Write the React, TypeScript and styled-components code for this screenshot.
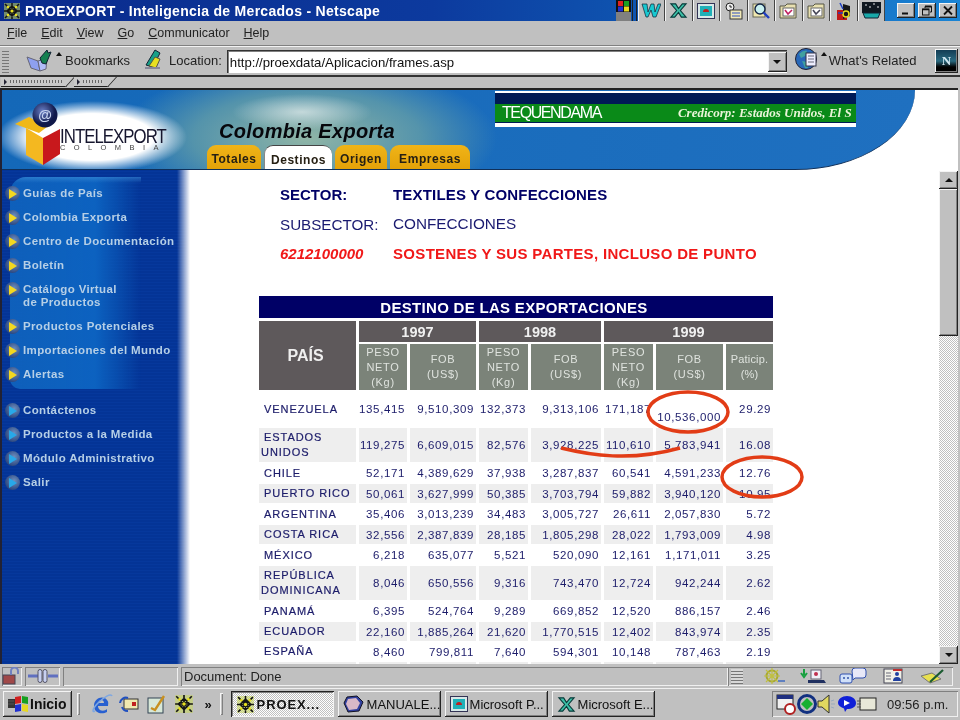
import React from 'react';
import styled, { createGlobalStyle, css } from 'styled-components';

const Global = createGlobalStyle`
  html, body { margin: 0; padding: 0; background: #c0c0c0; }
  body { font-family: "Liberation Sans", Arial, sans-serif; }
`;

const raised = css`
  background: #c0c0c0;
  box-shadow: inset -1px -1px 0 #222, inset 1px 1px 0 #f4f4f4, inset -2px -2px 0 #808080;
`;
const sunken = css`
  box-shadow: inset 1px 1px 0 #808080, inset -1px -1px 0 #f0f0f0;
`;

const Frame = styled.div`
  position: relative;
  width: 960px;
  height: 720px;
  overflow: hidden;
  background: #c0c0c0;
  display: flex;
  flex-direction: column;
  filter: blur(0.45px);
`;

/* Title bar */
const TitleBar = styled.div`
  height: 21px;
  flex: none;
  display: flex;
  align-items: center;
  background: linear-gradient(90deg, #0a2a8c 0%, #0c3a9e 45%, #1060b8 75%, #1a84d4 100%);
  color: #fff;
  padding-left: 3px;
`;
const TitleText = styled.div`
  font-weight: 700;
  font-size: 14px;
  letter-spacing: 0.29px;
  margin-left: 4px;
  white-space: nowrap;
`;
const QuickTray = styled.div`
  margin-left: auto;
  display: flex;
  align-items: center;
  height: 21px;
`;
const ColorBox = styled.div`
  width: 15px;
  height: 21px;
  background: #808080;
  margin-right: 1px;
  svg { display: block; }
`;
const Grip = styled.div`
  width: 3px;
  height: 21px;
  border-left: 1px solid #222;
  border-right: 1px solid #222;
  margin-right: 1px;
`;
const QuickBtn = styled.div`
  width: 27.5px;
  height: 21px;
  background: #c0c0c0;
  box-shadow: inset 1px 0 0 #f4f4f4, inset -1px 0 0 #444;
  display: flex;
  align-items: center;
  justify-content: center;
`;
const WinBtns = styled.div`
  display: flex;
  gap: 3px;
  margin-left: 12px;
  margin-right: 3px;
`;
const WinBtn = styled.div`
  ${raised}
  width: 18px;
  height: 15px;
  display: flex;
  align-items: center;
  justify-content: center;
`;

/* Menu */
const MenuBar = styled.div`
  height: 25px;
  flex: none;
  display: flex;
  align-items: center;
  gap: 14px;
  padding-left: 7px;
  font-size: 12.5px;
  color: #222;
  border-bottom: 1px solid #808080;
  box-sizing: border-box;
`;
const MenuItem = styled.span`
  &::first-letter { text-decoration: underline; }
  display: inline-block;
`;

/* Location toolbar */
const Toolbar = styled.div`
  height: 31px;
  flex: none;
  box-sizing: border-box;
  border-top: 1px solid #f2f2f2;
  border-bottom: 2px solid #333;
  display: flex;
  align-items: center;
  font-size: 13px;
  color: #222;
`;
const ToolGrip = styled.div`
  width: 7px;
  height: 24px;
  margin-left: 2px;
  background: repeating-linear-gradient(0deg, #777 0 1px, #c0c0c0 1px 3px);
`;
const BookIcon = styled.div`
  margin-left: 17px;
  width: 30px;
  height: 24px;
`;
const TinyArrow = styled.div`
  width: 0;
  height: 0;
  border-left: 3px solid transparent;
  border-right: 3px solid transparent;
  border-bottom: 4px solid #111;
  align-self: flex-start;
  margin: 5px 0 0 0;
`;
const ToolLabel = styled.span<{ $left: number }>`
  margin-left: ${p => p.$left}px;
  margin-bottom: 1px;
  white-space: nowrap;
`;
const UrlBox = styled.div`
  margin-left: 5px;
  width: 560px;
  height: 23px;
  box-sizing: border-box;
  background: #fff;
  box-shadow: inset 1px 1px 0 #333, inset 2px 2px 0 #808080;
  display: flex;
  align-items: center;
  justify-content: space-between;
  padding: 2px 0 0 3px;
  font-size: 13.2px;
  color: #111;
`;
const DropBtn = styled.div`
  ${raised}
  width: 19px;
  height: 20px;
  display: flex;
  align-items: center;
  justify-content: center;
  &::after {
    content: "";
    border-left: 4px solid transparent;
    border-right: 4px solid transparent;
    border-top: 4px solid #111;
  }
`;
const NBtn = styled.div`
  ${raised}
  margin-left: auto;
  margin-right: 2px;
  width: 23px;
  height: 24px;
  display: flex;
  align-items: center;
  justify-content: center;
  font: 700 13px "Liberation Serif", serif;
  color: #cfe6f0;
  background: linear-gradient(180deg, #103850 0%, #2a6a80 50%, #000 75%);
`;

/* Personal bar tabs */
const ThinBar = styled.div`
  height: 11px;
  flex: none;
  display: flex;
  padding-left: 1px;
  filter: drop-shadow(1px 0 0 #222);
`;
const ThinTab = styled.div<{ $w: number }>`
  width: ${p => p.$w}px;
  height: 10px;
  box-sizing: border-box;
  background: #c8c8c8;
  border-bottom: 1px solid #222;
  clip-path: polygon(0 0, 100% 0, calc(100% - 9px) 100%, 0 100%);
  display: flex;
  align-items: center;
  padding-left: 3px;
  &::before {
    content: "";
    border-top: 3px solid transparent;
    border-bottom: 3px solid transparent;
    border-left: 3px solid #223;
  }
  &::after {
    content: "";
    margin-left: 3px;
    height: 3px;
    flex: 1;
    margin-right: 12px;
    background: repeating-linear-gradient(90deg, #666 0 1px, #ccc 1px 3px);
  }
`;

/* Viewport */
const Viewport = styled.div`
  height: 576px;
  flex: none;
  box-sizing: border-box;
  border-top: 2px solid #222;
  border-left: 2px solid #223;
  margin-right: 2px;
  background: #fff;
  display: flex;
  flex-direction: column;
  overflow: hidden;
`;
const Banner = styled.div`
  height: 80px;
  width: 913px;
  flex: none;
  box-sizing: border-box;
  display: flex;
  border-bottom: 1px solid #10305a;
  border-bottom-right-radius: 120px 80px;
  overflow: hidden;
  background:
    radial-gradient(ellipse 70px 18px at 300px 22px, rgba(225,235,235,.75), rgba(225,235,235,0) 100%),
    radial-gradient(ellipse 190px 75px at 305px 48px, rgba(150,185,165,.95), rgba(110,165,165,.7) 60%, rgba(30,110,190,0) 100%),
    linear-gradient(90deg, #1468b8 0%, #1f70c0 100%);
`;
const LogoBlock = styled.div`
  width: 205px;
  flex: none;
  display: flex;
  align-items: flex-end;
  padding: 0 0 4px 13px;
  box-sizing: border-box;
  background: radial-gradient(ellipse 95px 36px at 90px 47px, #fff 0%, #fff 65%, rgba(255,255,255,0) 100%);
`;
const LogoWords = styled.div`
  margin-left: -5px;
  padding-bottom: 13px;
  display: flex;
  flex-direction: column;
`;
const LogoName = styled.div`
  font-size: 21px;
  line-height: 17px;
  letter-spacing: -1.2px;
  color: #16162e;
  transform: scaleX(.8);
  transform-origin: left;
  white-space: nowrap;
`;
const LogoSub = styled.div`
  font-size: 7.5px;
  line-height: 8px;
  letter-spacing: 8.4px;
  color: #444;
  white-space: nowrap;
`;
const TitleCol = styled.div`
  width: 288px;
  flex: none;
  display: flex;
  flex-direction: column;
  justify-content: flex-end;
`;
const BrandTitle = styled.div`
  margin: 0 0 2px 12px;
  font: italic 700 20px "Liberation Sans", sans-serif;
  letter-spacing: .3px;
  color: #07070c;
  white-space: nowrap;
`;
const Tabs = styled.div`
  display: flex;
  height: 24px;
  gap: 3px;
`;
const Tab = styled.div<{ $active?: boolean; $w: number }>`
  width: ${p => p.$w}px;
  height: ${p => (p.$active ? 25 : 24)}px;
  box-sizing: border-box;
  border-radius: 9px 9px 0 0;
  background: ${p => (p.$active ? '#fff' : 'linear-gradient(180deg,#f0b418,#e4a208)')};
  ${p => p.$active && 'border-top: 1px solid #444; border-left: 1px solid #888;'}
  font-weight: 700;
  font-size: 12px;
  letter-spacing: .55px;
  color: #262014;
  display: flex;
  align-items: center;
  justify-content: center;
  padding-top: 4px;
`;
const Ad = styled.div`
  margin-top: 1px;
  width: 361px;
  height: 36px;
  flex: none;
  box-sizing: border-box;
  background: #001a55;
  border-top: 2px solid #fff;
  border-bottom: 4px solid #fff;
  display: flex;
  flex-direction: column;
  justify-content: flex-end;
  overflow: hidden;
`;
const AdStripe = styled.div`
  height: 18px;
  margin-bottom: 1px;
  background: #0a8a18;
  color: #fff;
  display: flex;
  align-items: center;
  white-space: nowrap;
  overflow: hidden;
`;
const AdBrand = styled.span`
  margin-left: 7px;
  font-size: 16px;
  letter-spacing: -1.4px;
`;
const AdText = styled.span`
  margin-left: 77px;
  font: italic 700 13px "Liberation Serif", serif;
  letter-spacing: 0;
  color: #eaf5d8;
`;

const Body = styled.div`
  flex: 1;
  display: flex;
  min-height: 0;
`;

/* Sidebar */
const Sidebar = styled.nav`
  width: 188px;
  flex: none;
  box-sizing: border-box;
  padding-top: 7px;
  background:
    linear-gradient(90deg, rgba(255,255,255,0) 175px, #fff 188px),
    repeating-linear-gradient(0deg, #06389c 0 1px, #043496 1px 3px);
`;
const NavPanel = styled.div`
  width: 131px;
  margin-left: 8px;
  box-sizing: border-box;
  padding: 4px 0 3px;
  border-radius: 16px 0 0 10px;
  background:
    linear-gradient(180deg, rgba(70,150,220,.5) 0, rgba(70,150,220,0) 6px),
    linear-gradient(90deg, rgba(16,100,190,.9), #0c62c0 65%, rgba(8,80,180,0) 100%);
`;
const NavGroup = styled.div`
  margin: 9px 0 0 8px;
`;
const NavItem = styled.div<{ $tall?: boolean }>`
  height: ${p => (p.$tall ? 37 : 24)}px;
  display: flex;
  align-items: flex-start;
  margin-left: -5px;
  white-space: nowrap;
  font-weight: 700;
  font-size: 11.5px;
  letter-spacing: .36px;
  line-height: 13px;
  color: #b6cfe6;
`;
const NavLabel = styled.span`
  margin: 6px 0 0 3px;
`;
const Bullet = styled.span<{ $color: string }>`
  width: 15px;
  height: 15px;
  margin-top: 5px;
  flex: none;
  border-radius: 50%;
  background: radial-gradient(circle at 60% 40%, #6e90c0, #122a66);
  display: flex;
  align-items: center;
  justify-content: center;
  &::after {
    content: "";
    margin-left: 1px;
    border-top: 5px solid transparent;
    border-bottom: 5px solid transparent;
    border-left: 8px solid ${p => p.$color};
  }
`;

/* Main */
const Main = styled.main`
  flex: 1;
  min-width: 0;
  overflow: hidden;
  padding: 10px 0 0 90px;
`;
const InfoRow = styled.div<{ $h: number; $color: string }>`
  display: flex;
  height: ${p => p.$h}px;
  align-items: center;
  color: ${p => p.$color};
  white-space: nowrap;
`;
const InfoKey = styled.div<{ $italic?: boolean; $bold?: boolean }>`
  width: 113px;
  flex: none;
  font-size: ${p => (p.$bold ? 15 : 15.2)}px;
  font-weight: ${p => (p.$bold ? 700 : 400)};
  font-style: ${p => (p.$italic ? 'italic' : 'normal')};
`;
const InfoVal = styled.div<{ $bold?: boolean; $track?: number }>`
  font-size: ${p => (p.$bold ? 15 : 15.3)}px;
  font-weight: ${p => (p.$bold ? 700 : 400)};
  letter-spacing: ${p => p.$track || 0}px;
`;

const Table = styled.div`
  margin: 28px 0 0 -21px;
  width: 514px;
`;
const TableTitle = styled.div`
  height: 22px;
  background: #000066;
  color: #fff;
  font-weight: 700;
  font-size: 15px;
  letter-spacing: .3px;
  display: flex;
  align-items: center;
  justify-content: center;
  padding-right: 4px;
`;
const cols = css`
  display: grid;
  grid-template-columns: 97px 48px 66px 49px 70px 49px 67px 47px;
  column-gap: 3px;
`;
const HeadGrid = styled.div`
  ${cols}
  grid-template-rows: 21px 46px;
  row-gap: 2px;
  margin-top: 3px;
`;
const Country = styled.div`
  grid-row: 1 / span 2;
  background: #5e595b;
  color: #efefef;
  font-weight: 700;
  font-size: 16px;
  display: flex;
  align-items: center;
  justify-content: center;
  padding-right: 4px;
`;
const Year = styled.div<{ $span: number }>`
  grid-column: span ${p => p.$span};
  background: #5e595b;
  color: #f0f0f0;
  font-weight: 700;
  font-size: 14.5px;
  display: flex;
  align-items: center;
  justify-content: center;
`;
const SubHead = styled.div`
  background: #7b8379;
  color: #dfe3de;
  font-size: 11px;
  line-height: 15px;
  letter-spacing: .7px;
  text-align: center;
  display: flex;
  align-items: center;
  justify-content: center;
  white-space: pre-line;
`;
const SubHeadTight = styled(SubHead)`
  letter-spacing: .2px;
`;
const Row = styled.div<{ $h: number }>`
  ${cols}
  height: ${p => p.$h}px;
  font-size: 11.5px;
  letter-spacing: .62px;
  color: #1c1c6a;
`;
const Cell = styled.div<{ $shade: boolean; $drop?: number }>`
  background: ${p => (p.$shade ? '#eeeeee' : 'transparent')};
  display: flex;
  align-items: center;
  justify-content: flex-end;
  padding: ${p => p.$drop || 0}px 2px 0 0;
  white-space: nowrap;
`;
const Label = styled.div<{ $shade: boolean }>`
  background: ${p => (p.$shade ? '#eeeeee' : 'transparent')};
  display: flex;
  flex-direction: column;
  justify-content: center;
  font-size: 11px;
  letter-spacing: .95px;
  line-height: 15px;
  -webkit-text-stroke: .2px #1c1c6a;
  white-space: nowrap;
`;
const LabelLine = styled.span<{ $first: boolean }>`
  margin-left: ${p => (p.$first ? 5 : 2)}px;
`;

/* Scrollbar */
const Scroll = styled.div`
  width: 19px;
  flex: none;
  margin: 1px 0 0 auto;
  display: flex;
  flex-direction: column;
  background: repeating-conic-gradient(#fff 0 25%, #c0c0c0 0 50%) 0 0 / 2px 2px;
`;
const ScrollBtn = styled.div<{ $up?: boolean }>`
  ${raised}
  height: 18px;
  flex: none;
  display: flex;
  align-items: center;
  justify-content: center;
  &::after {
    content: "";
    border-left: 4px solid transparent;
    border-right: 4px solid transparent;
    ${p => (p.$up ? 'border-bottom: 4px solid #111;' : 'border-top: 4px solid #111;')}
  }
`;
const Thumb = styled.div`
  ${raised}
  height: 147px;
  flex: none;
`;
const ScrollFill = styled.div`
  flex: 1;
`;

/* Status */
const StatusBar = styled.div`
  height: 22px;
  flex: none;
  margin-top: 1px;
  display: flex;
  align-items: center;
  gap: 3px;
  padding: 0 7px 0 2px;
  box-sizing: border-box;
  font-size: 13px;
  color: #222;
`;
const StatusCell = styled.div<{ $w?: number }>`
  ${sunken}
  height: 19px;
  ${p => (p.$w ? `width: ${p.$w}px; flex: none;` : 'flex: 1;')}
  display: flex;
  align-items: center;
  justify-content: center;
  box-sizing: border-box;
`;
const StatusMsg = styled(StatusCell)`
  justify-content: flex-start;
  padding-left: 3px;
`;
const Components = styled.div`
  ${sunken}
  width: 225px;
  margin-left: -3px;
  height: 19px;
  display: flex;
  align-items: center;
  flex: none;
`;
const CompGrip = styled.div`
  width: 12px;
  height: 15px;
  margin: 0 11px 0 3px;
  background: repeating-linear-gradient(0deg, #777 0 1px, #d8d8d8 1px 3px);
`;
const CompSlot = styled.div`
  width: 41px;
  display: flex;
  justify-content: center;
`;

/* Taskbar */
const Taskbar = styled.div`
  height: 31px;
  flex: none;
  margin-top: 1px;
  box-sizing: border-box;
  border-top: 1px solid #f0f0f0;
  display: flex;
  align-items: center;
  padding-left: 3px;
`;
const StartBtn = styled.div`
  ${raised}
  width: 69px;
  height: 26px;
  display: flex;
  align-items: center;
  gap: 1px;
  padding-left: 5px;
  box-sizing: border-box;
  font-weight: 700;
  font-size: 14px;
  color: #111;
`;
const BarGrip = styled.div<{ $left: number; $right: number }>`
  width: 3px;
  height: 22px;
  margin: 0 ${p => p.$right}px 0 ${p => p.$left}px;
  box-shadow: inset 1px 1px 0 #f4f4f4, inset -1px -1px 0 #808080;
`;
const QuickLaunch = styled.div`
  width: 24px;
  margin-right: 3.4px;
  display: flex;
  justify-content: center;
`;
const Chevron = styled.span`
  font-weight: 700;
  font-size: 13px;
  margin-left: 5px;
  width: 11px;
  color: #111;
`;
const TaskBtn = styled.div<{ $active?: boolean }>`
  ${p => (p.$active
    ? `box-shadow: inset 1px 1px 0 #222, inset -1px -1px 0 #f4f4f4, inset 2px 2px 0 #808080;
       background: repeating-conic-gradient(#fff 0 25%, #c0c0c0 0 50%) 0 0 / 2px 2px;
       font-weight: 700; letter-spacing: .9px; font-size: 14px;`
    : raised)}
  width: 103px;
  height: 26px;
  margin-right: 4px;
  flex: none;
  box-sizing: border-box;
  display: flex;
  align-items: center;
  gap: 2px;
  padding-left: 5px;
  font-size: 13px;
  color: #111;
  white-space: nowrap;
  overflow: hidden;
`;
const Tray = styled.div`
  ${sunken}
  margin-left: auto;
  margin-right: 2px;
  width: 186px;
  height: 26px;
  box-sizing: border-box;
  display: flex;
  align-items: center;
  padding-left: 4px;
  font-size: 13px;
  color: #222;
`;
const Clock = styled.span`
  margin-left: 10px;
  white-space: nowrap;
`;

const Marks = styled.svg`
  position: absolute;
  inset: 0;
  pointer-events: none;
`;

/* Icons */
const Star: React.FC<{ s?: number }> = ({ s = 18 }) => (
  <svg width={s} height={s} viewBox="0 0 18 18" style={{ flex: 'none' }}>
    <rect x="1" y="1" width="16" height="16" fill="#c8d858" opacity=".55" />
    <g stroke="#141414" strokeWidth="1.5" fill="none">
      <path d="M2 2l14 14M16 2L2 16M9 1v16M1 9h16M4 9l5-5 5 5-5 5z" />
    </g>
    <g fill="#e8e020"><circle cx="5" cy="5" r="1.3" /><circle cx="13" cy="5" r="1.3" /><circle cx="5" cy="13" r="1.3" /><circle cx="13" cy="13" r="1.3" /><circle cx="9" cy="9" r="1.6" /></g>
  </svg>
);
const WordIcon = () => (
  <svg width="20" height="17" viewBox="0 0 20 17"><path d="M1 2h5l1 8 3-8h3l1 8 3-8h3l-5 13h-3l-2-7-3 7H5z" fill="#18c8d0" stroke="#123" strokeWidth=".7" /></svg>
);
const ExcelIcon: React.FC<{ s?: number }> = ({ s = 19 }) => (
  <svg width={s} height={s} viewBox="0 0 20 20" style={{ flex: 'none' }}><path d="M2 3h5l3 5 4-5h4l-6 7 6 7h-5l-3-5-4 5H2l6-7z" fill="#3cc0a8" stroke="#0a3a3a" strokeWidth="1.2" /></svg>
);
const PptIcon = () => (
  <svg width="18" height="16" viewBox="0 0 18 16" style={{ flex: 'none' }}><rect x=".5" y=".5" width="17" height="15" fill="#d8e8e8" stroke="#335" /><rect x="3" y="3" width="12" height="10" fill="#20b0b8" /><path d="M6 9a3 3 0 0 1 6 0z" fill="#c02020" /></svg>
);
const OutlookIcon = () => (
  <svg width="19" height="18" viewBox="0 0 19 18"><circle cx="6" cy="5" r="4" fill="#eee" stroke="#222" /><path d="M6 3v2h2" stroke="#222" fill="none" /><rect x="6" y="8" width="12" height="9" fill="#f0e8b8" stroke="#333" /><path d="M8 11h8M8 14h8" stroke="#3050c0" /></svg>
);
const SearchIcon = () => (
  <svg width="19" height="19" viewBox="0 0 19 19"><rect x="1" y="3" width="12" height="13" fill="#f0e8b0" stroke="#665" /><circle cx="8" cy="8" r="5" fill="#c8f0f0" stroke="#124" strokeWidth="1.4" /><path d="M11.5 11.5L17 17" stroke="#2040c0" strokeWidth="2.4" /></svg>
);
const FolderIcon: React.FC<{ tint: string }> = ({ tint }) => (
  <svg width="19" height="17" viewBox="0 0 19 17"><path d="M1 4h5l2-2h9v14H1z" fill="#e8e0b0" stroke="#554" /><rect x="4" y="6" width="11" height="8" fill="#fff" stroke="#666" /><path d="M6 8l3 4 4-4" stroke={tint} strokeWidth="1.6" fill="none" /></svg>
);
const AppIcon = () => (
  <svg width="20" height="20" viewBox="0 0 20 20"><path d="M3 9h10v10H3z" fill="#c01818" /><path d="M9 3l7 2v10l-7 3z" fill="#181818" /><circle cx="12" cy="13" r="3" fill="none" stroke="#e8d820" strokeWidth="1.6" /><path d="M4 12h5M6 2l3 6" stroke="#2040c0" strokeWidth="1.5" /></svg>
);
const DarkIcon = () => (
  <svg width="21" height="19" viewBox="0 0 21 19"><rect x="1" y="1" width="19" height="11" fill="#101820" /><g fill="#fff"><circle cx="5" cy="4" r=".8" /><circle cx="9" cy="6" r=".8" /><circle cx="13" cy="3" r=".8" /><circle cx="17" cy="6" r=".8" /></g><path d="M2 12h17l-2 5H4z" fill="#18a8a8" stroke="#123" /></svg>
);
const Colors = () => (
  <svg width="15" height="21" viewBox="0 0 15 21"><rect width="15" height="12" fill="#111" /><rect x="2" y="1" width="5" height="5" fill="#e02020" /><rect x="8" y="1" width="5" height="5" fill="#18a020" /><rect x="2" y="6.5" width="5" height="5" fill="#2030d0" /><rect x="8" y="6.5" width="5" height="5" fill="#e8d820" /></svg>
);
const MinGlyph = () => <svg width="12" height="11" viewBox="0 0 12 11"><path d="M2 8.5h6" stroke="#111" strokeWidth="2" /></svg>;
const RestoreGlyph = () => <svg width="12" height="11" viewBox="0 0 12 11" fill="none" stroke="#111"><path d="M4 3V1.5h6.5V7H9" strokeWidth="1" /><path d="M4 1.5h6.5" strokeWidth="2" /><rect x="1.5" y="4" width="6.5" height="6" /><path d="M1.5 4.5h6.5" strokeWidth="1.5" /></svg>;
const CloseGlyph = () => <svg width="12" height="11" viewBox="0 0 12 11"><path d="M2 1.5l8 8M10 1.5l-8 8" stroke="#111" strokeWidth="1.8" /></svg>;
const Bookmark = () => (
  <svg width="30" height="24" viewBox="0 0 30 24"><path d="M1 8l11 4 2 10-9-3z" fill="#8ea0f0" stroke="#667" /><path d="M12 12l9-3-1 11-6 2z" fill="#b0bcf8" stroke="#667" /><path d="M14 9l7-8 1 3 3-1-5 12-4-1z" fill="#148050" stroke="#123" /></svg>
);
const LocIcon = () => (
  <svg width="20" height="22" viewBox="0 0 20 22"><path d="M2 17L11 2l5 3-7 14z" fill="#18a088" stroke="#123" /><path d="M5 18l6-9 5 2-4 9z" fill="#e8e020" stroke="#554" /><path d="M1 20h15" stroke="#889" strokeWidth="2" /></svg>
);
const Globe = () => (
  <svg width="26" height="25" viewBox="0 0 26 25"><circle cx="11" cy="12" r="10.5" fill="#2868b8" stroke="#223" /><path d="M4 7c3-3 6-4 8-3l-2 5-4 2zM7 14l5 1 1 6-3 0z" fill="#40a0a0" /><rect x="11" y="6" width="10" height="13" fill="#eef" stroke="#334" /><path d="M13 9h6M13 12h6M13 15h6" stroke="#667" /></svg>
);
const Lock = () => (
  <svg width="20" height="18" viewBox="0 0 20 18"><rect x="1" y="8" width="12" height="9" fill="#a04848" stroke="#445" /><path d="M9 8V4a3.5 3.5 0 0 1 7 0v3" fill="none" stroke="#7080c0" strokeWidth="2" /></svg>
);
const Plug = () => (
  <svg width="32" height="16" viewBox="0 0 32 16"><path d="M1 8h10M21 8h10" stroke="#6070c0" strokeWidth="3" /><rect x="11" y="1.5" width="4" height="13" rx="2" fill="#c8d0f0" stroke="#556" /><rect x="16" y="1.5" width="4" height="13" rx="2" fill="#c8d0f0" stroke="#556" /></svg>
);
const Helm = () => (
  <svg width="24" height="16" viewBox="0 0 24 16"><circle cx="10" cy="8" r="5.5" fill="none" stroke="#a8a830" strokeWidth="2" /><path d="M10 0v16M2 8h16M4 2l12 12M16 2L4 14" stroke="#c0c040" strokeWidth="1.2" /><path d="M16 13h7" stroke="#6080c0" strokeWidth="2" /></svg>
);
const Inbox = () => (
  <svg width="28" height="16" viewBox="0 0 28 16"><path d="M5 1v6M2 5l3 4 3-4" stroke="#18a040" strokeWidth="2" fill="none" /><rect x="12" y="2" width="10" height="9" fill="#f0f0f8" stroke="#667" /><circle cx="17" cy="6" r="2" fill="#c03050" /><path d="M9 12h16l2 3H9z" fill="#203060" /></svg>
);
const Chat = () => (
  <svg width="30" height="16" viewBox="0 0 30 16"><rect x="2" y="6" width="12" height="9" rx="2" fill="#d0e0f8" stroke="#3050b0" /><circle cx="6" cy="10" r="1" fill="#35a" /><circle cx="10" cy="10" r="1" fill="#35a" /><path d="M14 3a3 3 0 0 1 3-3h8a3 3 0 0 1 3 3v4a3 3 0 0 1-3 3h-8l-2 2z" fill="#e8e8f8" stroke="#3050b0" /></svg>
);
const Contact = () => (
  <svg width="20" height="16" viewBox="0 0 20 16"><rect x="1" y="1" width="18" height="14" fill="#f0f0e8" stroke="#445" /><path d="M3 5h5M3 8h5M3 11h5" stroke="#667" /><circle cx="14" cy="6" r="2" fill="#2040a0" /><path d="M10 13a4 4 0 0 1 8 0z" fill="#2040a0" /><path d="M10 1h9v2h-9z" fill="#c03030" /></svg>
);
const Pen = () => (
  <svg width="26" height="16" viewBox="0 0 26 16"><path d="M1 8l9 7 11-4-9-6z" fill="#e8e050" stroke="#777" /><path d="M10 14L23 2" stroke="#1a5a30" strokeWidth="2.2" /></svg>
);
const WinFlag = () => (
  <svg width="21" height="20" viewBox="0 0 21 20" style={{ flex: 'none' }}><g fill="#111"><rect x="0" y="5" width="7" height="9" opacity=".8" /></g><path d="M7 3l6-1v7l-6 1z" fill="#d02020" /><path d="M14 2l6 1v7l-6-1z" fill="#18a020" /><path d="M7 11l6-1v7l-6 1z" fill="#2030d0" /><path d="M14 10l6 1v7l-6-1z" fill="#e8d820" /><path d="M0 7h6M0 10h6" stroke="#555" /></svg>
);
const IEIcon = () => (
  <svg width="22" height="22" viewBox="0 0 22 22"><path d="M17 13H7c0 5 6 6 9 3v3c-5 3-13 1-13-6 0-8 9-11 13-6 2 2 1 4 1 6zM7 10h6c0-4-5-4-6 0z" fill="#2860d0" fillRule="evenodd" /><path d="M4 18C1 20 1 16 7 10s13-10 14-7" fill="none" stroke="#80a8e0" strokeWidth="1.6" /></svg>
);
const MailSync = () => (
  <svg width="20" height="18" viewBox="0 0 20 18"><rect x="5" y="4" width="14" height="10" fill="#f0e8b0" stroke="#333" /><path d="M1 8a6 6 0 0 1 8-5M9 16a6 6 0 0 1-6-4" stroke="#2050c0" strokeWidth="2" fill="none" /><rect x="13" y="7" width="4" height="4" fill="#c02020" /></svg>
);
const Tick = () => (
  <svg width="20" height="20" viewBox="0 0 20 20"><rect x="1" y="4" width="15" height="15" fill="#d8e8d8" stroke="#345" /><path d="M4 14l4 2 9-14" stroke="#c89020" strokeWidth="2.4" fill="none" /></svg>
);
const Paper = () => (
  <svg width="22" height="20" viewBox="0 0 22 20" style={{ flex: 'none' }}><path d="M4 3l10-1 6 6-4 9-11 1L1 9z" fill="#3040a0" stroke="#112" /><path d="M5 5l8-1 4 5-3 6-8 1-3-6z" fill="#d8b8c8" /></svg>
);
const TrayCal = () => (
  <svg width="21" height="22" viewBox="0 0 21 22"><rect x="1" y="2" width="16" height="14" fill="#f0f0f0" stroke="#222" /><rect x="1" y="2" width="16" height="4" fill="#203080" /><circle cx="14" cy="16" r="5" fill="#fff" stroke="#b02020" strokeWidth="2" /></svg>
);
const TrayNet = () => (
  <svg width="20" height="20" viewBox="0 0 20 20"><circle cx="10" cy="10" r="8.5" fill="none" stroke="#123080" strokeWidth="3" /><path d="M10 4l6 6-6 6-6-6z" fill="#18b030" /></svg>
);
const Speaker = () => (
  <svg width="20" height="20" viewBox="0 0 20 20"><path d="M1 7h4l7-6v18l-7-6H1z" fill="#e0d860" stroke="#333" /><path d="M14 7l3-1M14 10h4M14 13l3 1" stroke="#9ab" /></svg>
);
const TrayChat = () => (
  <svg width="20" height="18" viewBox="0 0 20 18"><path d="M10 1c5 0 9 3 9 7s-4 6-9 6l-2 3-1-3.500C3 12 1 10 1 8c0-4 4-7 9-7z" fill="#1020d8" /><path d="M7 5l6 3-6 3z" fill="#fff" /></svg>
);
const TrayMail = () => (
  <svg width="20" height="14" viewBox="0 0 20 14"><rect x="3" y="1" width="16" height="12" fill="#e8e8d8" stroke="#222" /><path d="M0 4h4M0 7h4M0 10h4" stroke="#555" /></svg>
);
const LogoMark = () => (
  <svg width="50" height="63" viewBox="0 0 50 63" style={{ flex: 'none' }}>
    <path d="M0 22l14-7 18 10-8 6z" fill="#f0b818" />
    <path d="M11 26l17 10v27L11 53z" fill="#f4b820" />
    <path d="M28 36l17-9v25L28 63z" fill="#c8181c" />
    <defs><radialGradient id="orb" cx=".4" cy=".35"><stop offset="0" stopColor="#6a80c8" /><stop offset="1" stopColor="#10184a" /></radialGradient></defs>
    <circle cx="30" cy="13" r="12.500" fill="url(#orb)" />
    <text x="30" y="18" textAnchor="middle" fontSize="14" fontWeight="700" fill="#c8d4f0" fontFamily="Liberation Sans">@</text>
  </svg>
);

const nav1: { t: React.ReactNode; tall?: boolean }[] = [
  { t: 'Guías de País' },
  { t: 'Colombia Exporta' },
  { t: 'Centro de Documentación' },
  { t: 'Boletín' },
  { t: <>Catálogo Virtual<br />de Productos</>, tall: true },
  { t: 'Productos Potenciales' },
  { t: 'Importaciones del Mundo' },
  { t: 'Alertas' },
];
const nav2 = ['Contáctenos', 'Productos a la Medida', 'Módulo Administrativo', 'Salir'];

const rows: { n: string[]; v: string[]; h: number; s: boolean }[] = [
  { n: ['VENEZUELA'], v: ['135,415', '9,510,309', '132,373', '9,313,106', '171,187', '10,536,000', '29.29'], h: 38, s: false },
  { n: ['ESTADOS', 'UNIDOS'], v: ['119,275', '6,609,015', '82,576', '3,928,225', '110,610', '5,783,941', '16.08'], h: 34, s: true },
  { n: ['CHILE'], v: ['52,171', '4,389,629', '37,938', '3,287,837', '60,541', '4,591,233', '12.76'], h: 22, s: false },
  { n: ['PUERTO RICO'], v: ['50,061', '3,627,999', '50,385', '3,703,794', '59,882', '3,940,120', '10.95'], h: 19, s: true },
  { n: ['ARGENTINA'], v: ['35,406', '3,013,239', '34,483', '3,005,727', '26,611', '2,057,830', '5.72'], h: 22, s: false },
  { n: ['COSTA RICA'], v: ['32,556', '2,387,839', '28,185', '1,805,298', '28,022', '1,793,009', '4.98'], h: 19, s: true },
  { n: ['MÉXICO'], v: ['6,218', '635,077', '5,521', '520,090', '12,161', '1,171,011', '3.25'], h: 22, s: false },
  { n: ['REPÚBLICA', 'DOMINICANA'], v: ['8,046', '650,556', '9,316', '743,470', '12,724', '942,244', '2.62'], h: 34, s: true },
  { n: ['PANAMÁ'], v: ['6,395', '524,764', '9,289', '669,852', '12,520', '886,157', '2.46'], h: 22, s: false },
  { n: ['ECUADOR'], v: ['22,160', '1,885,264', '21,620', '1,770,515', '12,402', '843,974', '2.35'], h: 19, s: true },
  { n: ['ESPAÑA'], v: ['8,460', '799,811', '7,640', '594,301', '10,148', '787,463', '2.19'], h: 21, s: false },
  { n: [''], v: ['', '', '', '', '', '', ''], h: 6, s: true },
];

const peso = 'PESO\nNETO\n(Kg)';
const fob = 'FOB\n(US$)';

export default function App() {
  return (
    <Frame>
      <Global />
      <TitleBar>
        <Star />
        <TitleText>PROEXPORT - Inteligencia de Mercados - Netscape</TitleText>
        <QuickTray>
          <ColorBox><Colors /></ColorBox>
          <Grip />
          <QuickBtn><WordIcon /></QuickBtn>
          <QuickBtn><ExcelIcon /></QuickBtn>
          <QuickBtn><PptIcon /></QuickBtn>
          <QuickBtn><OutlookIcon /></QuickBtn>
          <QuickBtn><SearchIcon /></QuickBtn>
          <QuickBtn><FolderIcon tint="#c02060" /></QuickBtn>
          <QuickBtn><FolderIcon tint="#445" /></QuickBtn>
          <QuickBtn><AppIcon /></QuickBtn>
          <QuickBtn><DarkIcon /></QuickBtn>
          <WinBtns>
            <WinBtn><MinGlyph /></WinBtn>
            <WinBtn><RestoreGlyph /></WinBtn>
            <WinBtn><CloseGlyph /></WinBtn>
          </WinBtns>
        </QuickTray>
      </TitleBar>

      <MenuBar>
        {['File', 'Edit', 'View', 'Go', 'Communicator', 'Help'].map(m => <MenuItem key={m}>{m}</MenuItem>)}
      </MenuBar>

      <Toolbar>
        <ToolGrip />
        <BookIcon><Bookmark /></BookIcon>
        <TinyArrow />
        <ToolLabel $left={3}>Bookmarks</ToolLabel>
        <ToolLabel $left={14}><LocIcon /></ToolLabel>
        <ToolLabel $left={5}>Location:</ToolLabel>
        <UrlBox>http://proexdata/Aplicacion/frames.asp<DropBtn /></UrlBox>
        <ToolLabel $left={8}><Globe /></ToolLabel>
        <TinyArrow />
        <ToolLabel $left={2}>What's Related</ToolLabel>
        <NBtn>N</NBtn>
      </Toolbar>

      <ThinBar>
        <ThinTab $w={73} />
        <ThinTab $w={42} />
      </ThinBar>

      <Viewport>
        <Banner>
          <LogoBlock>
            <LogoMark />
            <LogoWords>
              <LogoName>INTELEXPORT</LogoName>
              <LogoSub>COLOMBIA</LogoSub>
            </LogoWords>
          </LogoBlock>
          <TitleCol>
            <BrandTitle>Colombia Exporta</BrandTitle>
            <Tabs>
              <Tab $w={54}>Totales</Tab>
              <Tab $w={68} $active>Destinos</Tab>
              <Tab $w={52}>Origen</Tab>
              <Tab $w={80}>Empresas</Tab>
            </Tabs>
          </TitleCol>
          <Ad>
            <AdStripe>
              <AdBrand>TEQUENDAMA</AdBrand>
              <AdText>Credicorp: Estados Unidos, El S</AdText>
            </AdStripe>
          </Ad>
        </Banner>

        <Body>
          <Sidebar>
            <NavPanel>
              {nav1.map((n, i) => (
                <NavItem key={i} $tall={n.tall}>
                  <Bullet $color="#f4d820" />
                  <NavLabel>{n.t}</NavLabel>
                </NavItem>
              ))}
            </NavPanel>
            <NavGroup>
              {nav2.map(n => (
                <NavItem key={n}>
                  <Bullet $color="#28a8e8" />
                  <NavLabel>{n}</NavLabel>
                </NavItem>
              ))}
            </NavGroup>
          </Sidebar>

          <Main>
            <InfoRow $h={29} $color="#000066">
              <InfoKey $bold>SECTOR:</InfoKey>
              <InfoVal $bold $track={0.18}>TEXTILES Y CONFECCIONES</InfoVal>
            </InfoRow>
            <InfoRow $h={30} $color="#1a1a70">
              <InfoKey>SUBSECTOR:</InfoKey>
              <InfoVal>CONFECCIONES</InfoVal>
            </InfoRow>
            <InfoRow $h={29} $color="#f01818">
              <InfoKey $bold $italic>6212100000</InfoKey>
              <InfoVal $bold $track={0.32}>SOSTENES Y SUS PARTES, INCLUSO DE PUNTO</InfoVal>
            </InfoRow>

            <Table>
              <TableTitle>DESTINO DE LAS EXPORTACIONES</TableTitle>
              <HeadGrid>
                <Country>PAÍS</Country>
                <Year $span={2}>1997</Year>
                <Year $span={2}>1998</Year>
                <Year $span={3}>1999</Year>
                <SubHead>{peso}</SubHead>
                <SubHead>{fob}</SubHead>
                <SubHead>{peso}</SubHead>
                <SubHead>{fob}</SubHead>
                <SubHead>{peso}</SubHead>
                <SubHead>{fob}</SubHead>
                <SubHeadTight>{'Paticip.\n(%)'}</SubHeadTight>
              </HeadGrid>
              {rows.map((r, i) => (
                <Row key={i} $h={r.h}>
                  <Label $shade={r.s}>
                    {r.n.map((l, j) => <LabelLine key={l} $first={j === 0}>{l}</LabelLine>)}
                  </Label>
                  {r.v.map((v, j) => (
                    <Cell key={j} $shade={r.s} $drop={v === '10,536,000' ? 15 : 0}>{v}</Cell>
                  ))}
                </Row>
              ))}
            </Table>
          </Main>

          <Scroll>
            <ScrollBtn $up />
            <Thumb />
            <ScrollFill />
            <ScrollBtn />
          </Scroll>
        </Body>
      </Viewport>

      <StatusBar>
        <StatusCell $w={20}><Lock /></StatusCell>
        <StatusCell $w={35}><Plug /></StatusCell>
        <StatusCell $w={115} />
        <StatusMsg>Document: Done</StatusMsg>
        <Components>
          <CompGrip />
          <CompSlot><Helm /></CompSlot>
          <CompSlot><Inbox /></CompSlot>
          <CompSlot><Chat /></CompSlot>
          <CompSlot><Contact /></CompSlot>
          <CompSlot><Pen /></CompSlot>
        </Components>
      </StatusBar>

      <Taskbar>
        <StartBtn><WinFlag />Inicio</StartBtn>
        <BarGrip $left={5} $right={10} />
        <QuickLaunch><IEIcon /></QuickLaunch>
        <QuickLaunch><MailSync /></QuickLaunch>
        <QuickLaunch><Tick /></QuickLaunch>
        <QuickLaunch><Star s={20} /></QuickLaunch>
        <Chevron>»</Chevron>
        <BarGrip $left={4} $right={8} />
        <TaskBtn $active><Star s={19} />PROEX...</TaskBtn>
        <TaskBtn><Paper />MANUALE...</TaskBtn>
        <TaskBtn><PptIcon />Microsoft P...</TaskBtn>
        <TaskBtn><ExcelIcon />Microsoft E...</TaskBtn>
        <Tray>
          <TrayCal />
          <TrayNet />
          <Speaker />
          <TrayChat />
          <TrayMail />
          <Clock>09:56 p.m.</Clock>
        </Tray>
      </Taskbar>

      <Marks width="960" height="720" viewBox="0 0 960 720" fill="none" stroke="#e23c16" strokeWidth="3.5">
        <ellipse cx="688" cy="412" rx="40" ry="20" />
        <ellipse cx="762" cy="477" rx="40" ry="20" />
        <path d="M561 448C590 455 630 462 680 448" />
      </Marks>
    </Frame>
  );
}
